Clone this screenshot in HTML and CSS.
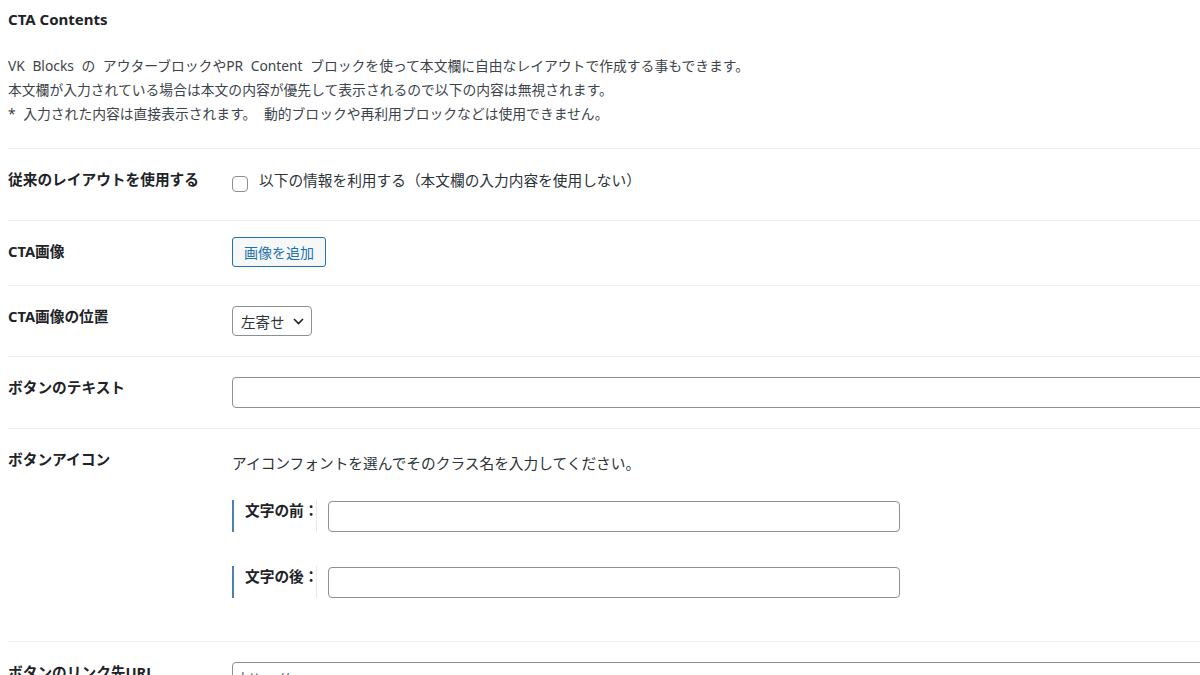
FILE: index.html
```html
<!DOCTYPE html>
<html lang="ja">
  <head>
    <meta charset="UTF-8" />
    <meta name="viewport" content="width=device-width, initial-scale=1.0" />
    <title>CTA Contents</title>
    <link rel="stylesheet" href="styles.css">
  </head>

  <body>
    <div class="wrap">
      <h2 class="title">CTA Contents</h2>
      <p class="intro">
        VK Blocks の アウターブロックやPR Content ブロックを使って本文欄に自由なレイアウトで作成する事もできます。<br>
        本文欄が入力されている場合は本文の内容が優先して表示されるので以下の内容は無視されます。<br>
        * 入力された内容は直接表示されます。 動的ブロックや再利用ブロックなどは使用できません。
      </p>

      <div class="form">
        <div class="row">
          <div class="label">従来のレイアウトを使用する</div>
          <div class="field">
            <label class="check">
              <input type="checkbox" class="checkbox">
              <span>以下の情報を利用する（本文欄の入力内容を使用しない）</span>
            </label>
          </div>
        </div>

        <div class="row">
          <div class="label">CTA画像</div>
          <div class="field field-btn">
            <button class="media-btn" type="button">画像を追加</button>
          </div>
        </div>

        <div class="row">
          <div class="label">CTA画像の位置</div>
          <div class="field">
            <div class="select">
              <span>左寄せ</span>
              <svg width="11" height="7" viewBox="0 0 11 7">
                <path d="M1 1 L5.5 5.5 L10 1" fill="none" stroke="#1d2327" stroke-width="1.6" />
              </svg>
            </div>
          </div>
        </div>

        <div class="row">
          <div class="label">ボタンのテキスト</div>
          <div class="field">
            <input type="text" class="text-input wide">
          </div>
        </div>

        <div class="row">
          <div class="label">ボタンアイコン</div>
          <div class="field field-icon">
            <p class="desc">アイコンフォントを選んでそのクラス名を入力してください。</p>
            <div class="sub-list">
              <div class="sub-row">
                <div class="sub-label">文字の前：</div>
                <input type="text" class="text-input sub-input">
              </div>
              <div class="sub-row">
                <div class="sub-label">文字の後：</div>
                <input type="text" class="text-input sub-input">
              </div>
            </div>
          </div>
        </div>

        <div class="row">
          <div class="label">ボタンのリンク先URL</div>
          <div class="field">
            <input type="text" class="text-input wide" placeholder="https://">
          </div>
        </div>
      </div>
    </div>
  </body>
</html>
```

FILE: styles.css
```css
* {
  margin: 0;
  padding: 0;
  box-sizing: border-box;
}

body {
  width: 1200px;
  height: 675px;
  overflow: hidden;
  background: #fff;
  color: #1d2327;
  font-family: "Noto Sans", "Noto Sans CJK JP", sans-serif;
}

.wrap {
  padding: 8px 0 0 8px;
}

.title {
  font-size: 15px;
  font-weight: 700;
  line-height: 22px;
}

.intro {
  margin: 24px 0 22px;
  font-size: 13.8px;
  line-height: 24px;
  word-spacing: 4px;
  color: #3c434a;
}

.row {
  display: flex;
  align-items: flex-start;
  border-top: 1px solid #efefef;
}

.label {
  width: 224px;
  flex-shrink: 0;
  padding: 19px 0 23px;
  font-size: 14.7px;
  font-weight: 700;
  line-height: 22px;
  white-space: nowrap;
}

.field {
  flex: 1;
  padding: 20px 0;
  font-size: 14.7px;
}

.field-btn {
  padding: 16px 0;
}

.check {
  display: flex;
  align-items: flex-start;
  gap: 11px;
  min-height: 31px;
  color: #2c3338;
  line-height: 22px;
}

.checkbox {
  appearance: none;
  width: 16px;
  height: 16px;
  margin-top: 7px;
  border: 1px solid #8c8f94;
  border-radius: 4px;
  background: #fff;
}

.media-btn {
  height: 30px;
  padding: 0 11px;
  border: 1px solid #2271b1;
  border-radius: 3px;
  background: #f6f7f7;
  color: #2271b1;
  font-family: inherit;
  font-size: 14px;
  cursor: pointer;
}

.select {
  display: inline-flex;
  align-items: center;
  gap: 8px;
  height: 30px;
  padding: 0 7px 0 8px;
  border: 1px solid #8c8f94;
  border-radius: 4px;
  color: #2c3338;
  font-size: 14.5px;
  white-space: nowrap;
}

.text-input {
  height: 31px;
  border: 1px solid #8c8f94;
  border-radius: 4px;
  background: #fff;
  padding: 0 8px;
  font-family: inherit;
  font-size: 14px;
  outline: none;
}

.text-input::placeholder {
  color: #646970;
}

.wide {
  width: 1000px;
}

.field-icon {
  padding-bottom: 20px;
}

.desc {
  line-height: 28px;
  color: #2c3338;
}

.sub-list {
  display: flex;
  flex-direction: column;
  gap: 34px;
  margin: 23px 0 23px;
}

.sub-row {
  display: flex;
  align-items: flex-start;
  height: 32px;
  border-left: 2px solid #4d80b0;
}

.sub-label {
  width: 83px;
  height: 32px;
  padding-left: 11px;
  border-right: 1px solid #e8e8e8;
  font-weight: 700;
  line-height: 20px;
  white-space: nowrap;
}

.sub-input {
  width: 572px;
  margin: 1px 0 0 11px;
}
```
